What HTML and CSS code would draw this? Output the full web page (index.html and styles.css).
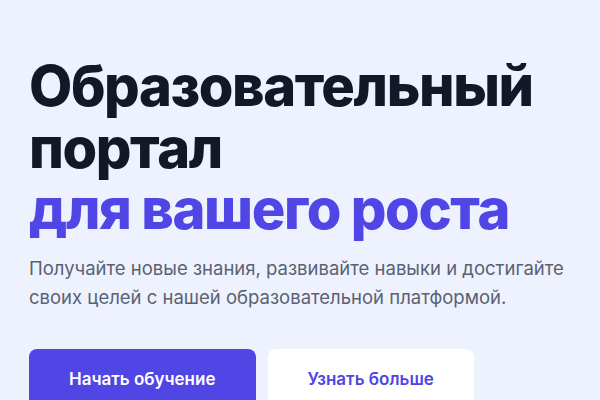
FILE: index.html
```html
<!DOCTYPE html>
<html lang="ru">
<head>
    <meta charset="UTF-8">
    <meta name="viewport" content="width=device-width, initial-scale=1.0">
    <title>Образовательный портал</title>
    <link rel="stylesheet" href="styles.css">
</head>
<body>
    <section class="hero">
        <div class="hero-text">
            <h1 class="title">
                Образовательный портал
                <span class="accent">для вашего роста</span>
            </h1>
            <p class="lead">Получайте новые знания, развивайте навыки и достигайте своих целей с нашей образовательной платформой.</p>
            <div class="actions">
                <a href="#" class="btn btn-primary">Начать обучение</a>
                <a href="#" class="btn btn-light">Узнать больше</a>
            </div>
        </div>
        <div class="hero-visual"></div>
    </section>
</body>
</html>
```

FILE: styles.css
```css
* {
    padding: 0;
    margin: 0;
    box-sizing: border-box;
}

body {
    background-color: #eef2ff;
    font-family: Inter, "Noto Sans", sans-serif;
    overflow: hidden;
}

.hero {
    display: flex;
    gap: 20px;
    padding: 56px 0 0 29px;
}

.hero-text {
    flex: 0 0 556px;
}

.title {
    font-size: 56px;
    font-weight: 800;
    line-height: 1.1;
    letter-spacing: -0.025em;
    color: #111827;
}

.accent {
    display: block;
    color: #4f46e5;
}

.lead {
    margin-top: 13px;
    font-size: 18.5px;
    line-height: 29px;
    color: #5a6170;
}

.actions {
    display: flex;
    gap: 12px;
    margin-top: 37px;
}

.btn {
    display: inline-block;
    padding: 20px 40px;
    border-radius: 8px;
    font-size: 17px;
    font-weight: 600;
    text-decoration: none;
}

.btn-primary {
    background-color: #4f46e5;
    color: #fff;
}

.btn-light {
    background-color: #fff;
    color: #4f46e5;
}

/* картинка справа, почти вся за краем экрана */
.hero-visual {
    flex: 0 0 400px;
    height: 360px;
    margin-top: 10px;
    border-radius: 16px;
    background-color: #ebeffd;
}
```
